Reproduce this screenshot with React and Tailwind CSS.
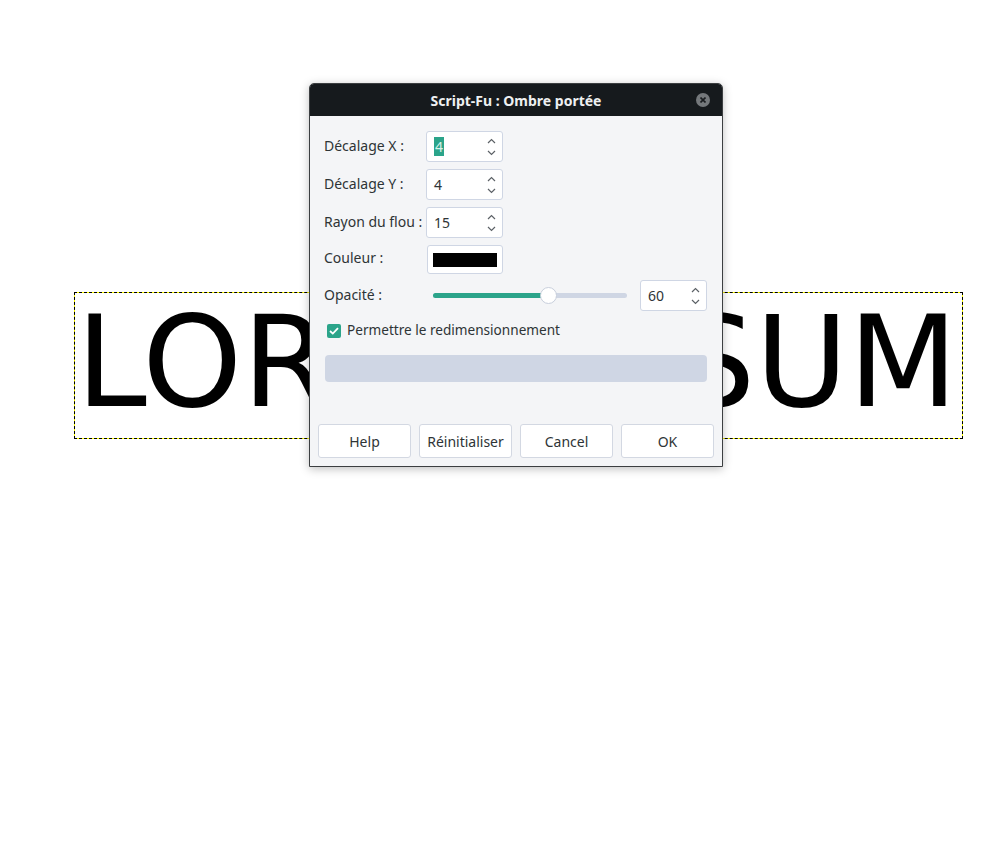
import { useState } from "react";

function SpinArrows() {
  return (
    <div className="flex flex-col items-center justify-center gap-[6px] pr-[6px]">
      <svg width="9" height="6" viewBox="0 0 9 6" fill="none" stroke="#5c6166" strokeWidth="1.2">
        <path d="M1 5 L4.5 1.5 L8 5" />
      </svg>
      <svg width="9" height="6" viewBox="0 0 9 6" fill="none" stroke="#5c6166" strokeWidth="1.2">
        <path d="M1 1 L4.5 4.5 L8 1" />
      </svg>
    </div>
  );
}

function SpinInput({ value, selected, width = "w-[77px]" }) {
  return (
    <div className={`${width} h-[31px] flex items-center justify-between bg-white border border-[#cfd6e4] rounded-[3px]`}>
      <span className="pl-[7px] text-[14px] text-[#2e3436]">
        {selected ? (
          <span className="bg-[#2ba48a] text-[#d8f2e9] px-[1px]">{value}</span>
        ) : (
          value
        )}
      </span>
      <SpinArrows />
    </div>
  );
}

function DialogButton({ label }) {
  return (
    <button className="w-[93px] h-[34px] bg-white border border-[#d3d8e2] rounded-[3px] text-[14px] text-[#2e3436]">
      {label}
    </button>
  );
}

export default function App() {
  const [resize, setResize] = useState(true);

  return (
    <div className="relative w-[1000px] h-[861px] bg-white overflow-hidden" style={{ fontFamily: '"Noto Sans", sans-serif' }}>
      {/* text layer on the canvas */}
      <div className="pt-[292px] pl-[74px]">
        <div className="w-[889px] h-[147px] bg-[#ffff00] border border-dashed border-black">
          <div className="w-full h-full bg-white overflow-hidden">
            <div
              className="pt-[6px] pl-[1px] text-[127px] leading-none text-black whitespace-nowrap"
              style={{ fontFamily: '"DejaVu Sans", sans-serif' }}
            >
              LOREM IPSUM
            </div>
          </div>
        </div>
      </div>

      {/* Script-Fu dialog */}
      <div className="absolute left-[309px] top-[83px] w-[414px] h-[384px] flex flex-col bg-[#f4f5f7] border border-[#3c3f41] rounded-t-[5px] shadow-[0_2px_10px_rgba(0,0,0,0.25)]">
        <div className="h-[32px] flex items-center justify-center relative bg-[#161a1d] rounded-t-[4px]">
          <span className="text-[14px] font-bold text-[#eef0f1]">Script-Fu : Ombre portée</span>
          <div className="absolute right-[12px] top-[9px] w-[14px] h-[14px] rounded-full bg-[#74787b] flex items-center justify-center">
            <svg width="6" height="6" viewBox="0 0 6 6" stroke="#1a1d20" strokeWidth="1.6">
              <path d="M0.5 0.5 L5.5 5.5 M5.5 0.5 L0.5 5.5" />
            </svg>
          </div>
        </div>

        <div className="flex-1 flex flex-col px-[14px] pt-[15px] text-[14px] text-[#2e3436]">
          <div className="grid grid-cols-[102px_1fr] gap-y-[7px] items-center">
            <span className="pb-[3px]">Décalage X :</span>
            <SpinInput value="4" selected />
            <span className="pb-[3px]">Décalage Y :</span>
            <SpinInput value="4" />
            <span className="pb-[3px]">Rayon du flou :</span>
            <SpinInput value="15" />
            <span className="self-start pt-[2px]">Couleur :</span>
            <div className="w-[76px] h-[29px] ml-[1px] bg-white border border-[#cfd6e4] rounded-[3px] flex items-center justify-center">
              <div className="w-[64px] h-[14px] bg-black" />
            </div>
          </div>

          <div className="flex items-center mt-[6px]">
            <span className="w-[109px] pb-[3px]">Opacité :</span>
            <div className="w-[194px] h-[5px] rounded-full bg-[#cfd6e4] relative">
              <div className="w-[115px] h-full rounded-full bg-[#2ba48a]" />
              <div className="absolute left-[107px] top-[-6px] w-[17px] h-[17px] rounded-full bg-white border border-[#c8cfdc]" />
            </div>
            <div className="ml-[13px]">
              <SpinInput value="60" width="w-[67px]" />
            </div>
          </div>

          <label className="flex items-center gap-[6px] mt-[9px] ml-[3px]" onClick={() => setResize(!resize)}>
            <span className={`w-[14px] h-[14px] rounded-[2px] flex items-center justify-center ${resize ? "bg-[#2ba48a]" : "bg-white border border-[#cfd6e4]"}`}>
              {resize && (
                <svg width="10" height="8" viewBox="0 0 10 8" fill="none" stroke="white" strokeWidth="1.8">
                  <path d="M1 4 L3.8 6.6 L9 1.2" />
                </svg>
              )}
            </span>
            <span className="text-[13.6px] pb-[2px]">Permettre le redimensionnement</span>
          </label>

          <div className="mt-[13px] ml-[1px] w-[382px] h-[27px] rounded-[4px] bg-[#cfd6e4]" />
        </div>

        <div className="flex gap-[8px] px-[8px] pb-[8px]">
          <DialogButton label="Help" />
          <DialogButton label="Réinitialiser" />
          <DialogButton label="Cancel" />
          <DialogButton label="OK" />
        </div>
      </div>
    </div>
  );
}
